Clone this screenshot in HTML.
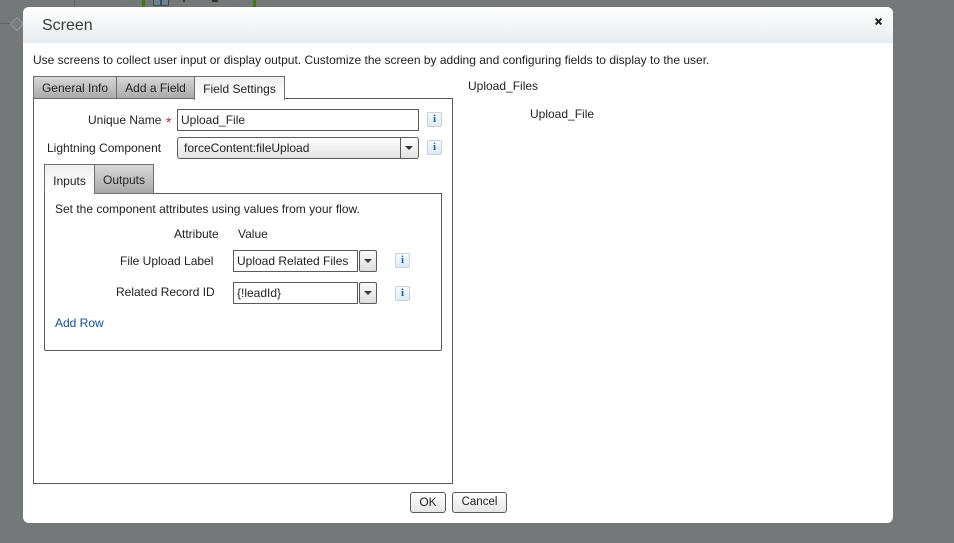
<!DOCTYPE html>
<html>
<head>
<meta charset="utf-8">
<style>
html,body{margin:0;padding:0;}
body{width:954px;height:543px;overflow:hidden;background:#747878;position:relative;font-family:"Liberation Sans",sans-serif;font-size:12px;color:#222;}
.a{position:absolute;box-sizing:border-box;white-space:nowrap;}
.t{position:absolute;white-space:nowrap;line-height:14px;}
.tab{position:absolute;box-sizing:border-box;border:1px solid #6f6f6f;background:linear-gradient(#d8d8d8,#a9a9a9);text-align:center;}
.tab.on{background:linear-gradient(#f0f0f0,#fff);}
.inp{position:absolute;box-sizing:border-box;border:1px solid #5a5a5a;background:#fff;padding-left:3px;}
.info{position:absolute;box-sizing:border-box;width:15px;height:15px;border:1px solid #c9d2da;border-radius:2px;background:linear-gradient(#f8fafc,#e2e9ef);color:#0b62c4;font:bold 11px/13px "Liberation Serif",serif;text-align:center;}
.arr{position:absolute;width:0;height:0;border-left:4px solid transparent;border-right:4px solid transparent;border-top:4px solid #333;}
.btn{position:absolute;box-sizing:border-box;border:1px solid #5a5a5a;border-radius:3px;background:linear-gradient(#fff,#e6e6e6);text-align:center;}
</style>
</head>
<body>
<!-- background -->
<div class="a" style="left:74px;top:0;width:1px;height:7px;background:#5f6363"></div>
<div class="a" style="left:142px;top:0;width:3px;height:7px;background:#3f7a10"></div>
<div class="a" style="left:253px;top:0;width:3px;height:7px;background:#3f7a10"></div>
<div class="a" style="left:153px;top:0;width:16px;height:6px;border:1px solid #3d4a55;border-top:0;background:#6f8290"></div>
<div class="a" style="left:160px;top:0;width:2px;height:6px;background:#3d4a55"></div>
<div class="a" style="left:183px;top:0;width:2px;height:2px;background:#333"></div>
<div class="a" style="left:212px;top:0;width:6px;height:2px;background:#333"></div>
<div class="a" style="left:0;top:23px;width:12px;height:1px;background:#5f6363"></div>
<div class="a" style="left:12px;top:19px;width:10px;height:10px;border:1px solid #959999;transform:rotate(45deg);background:#787c7c"></div>

<!-- dialog -->
<div class="a" style="left:23px;top:7px;width:870px;height:516px;background:#fff;border-radius:6px;overflow:hidden">
  <div class="a" style="left:0;top:0;width:870px;height:36px;background:linear-gradient(#fff,#e8ecee)"></div>
</div>
<div class="t" style="left:42px;top:17px;font-size:16px;line-height:18px;color:#3a3a3a">Screen</div>
<svg class="a" style="left:875px;top:18px" width="7" height="7" viewBox="0 0 7 7"><path d="M0.6 0.6L6.4 6.4M6.4 0.6L0.6 6.4" stroke="#222" stroke-width="2" fill="none"/></svg>
<div class="t" style="left:33px;top:53px">Use screens to collect user input or display output. Customize the screen by adding and configuring fields to display to the user.</div>

<!-- left panel -->
<div class="a" style="left:33px;top:98px;width:420px;height:386px;border:1px solid #5a5a5a"></div>
<div class="tab" style="left:33px;top:76px;width:84px;height:23px;line-height:22px">General Info</div>
<div class="tab" style="left:116px;top:76px;width:79px;height:23px;line-height:22px">Add a Field</div>
<div class="tab on" style="left:194px;top:76px;width:91px;height:24px;line-height:24px;border-bottom:0">Field Settings</div>

<div class="t" style="left:88px;top:113px">Unique Name</div>
<div class="t" style="left:166px;top:115px;color:#d8232a;font-size:14px;">*</div>
<div class="inp" style="left:177px;top:109px;width:242px;height:22px;line-height:20px">Upload_File</div>
<div class="info" style="left:427px;top:112px">i</div>

<div class="t" style="left:47px;top:141px">Lightning Component</div>
<div class="a" style="left:177px;top:137px;width:242px;height:22px;border:1px solid #5a5a5a;border-radius:3px;background:linear-gradient(#fff,#e2e2e2);padding-left:6px;line-height:21px">forceContent:fileUpload</div>
<div class="a" style="left:400px;top:137px;width:1px;height:22px;background:#5a5a5a"></div>
<div class="arr" style="left:405px;top:146px"></div>
<div class="info" style="left:427px;top:140px">i</div>

<!-- inner panel -->
<div class="a" style="left:44px;top:193px;width:398px;height:158px;border:1px solid #5a5a5a;border-radius:0 0 2px 2px"></div>
<div class="tab on" style="left:44px;top:164px;width:51px;height:30px;line-height:33px;border-bottom:0">Inputs</div>
<div class="tab" style="left:94px;top:164px;width:60px;height:30px;line-height:30px">Outputs</div>

<div class="t" style="left:55px;top:202px">Set the component attributes using values from your flow.</div>
<div class="t" style="left:174px;top:227px">Attribute</div>
<div class="t" style="left:238px;top:227px">Value</div>

<div class="t" style="left:120px;top:254px">File Upload Label</div>
<div class="inp" style="left:233px;top:250px;width:125px;height:22px;line-height:21px">Upload Related Files</div>
<div class="btn" style="left:359px;top:250px;width:18px;height:22px;background:linear-gradient(#fafafa,#dcdcdc);border-radius:2px"></div>
<div class="arr" style="left:364px;top:259px"></div>
<div class="info" style="left:395px;top:253px">i</div>

<div class="t" style="left:116px;top:285px">Related Record ID</div>
<div class="inp" style="left:233px;top:282px;width:125px;height:22px;line-height:21px">{!leadId}</div>
<div class="btn" style="left:359px;top:282px;width:18px;height:22px;background:linear-gradient(#fafafa,#dcdcdc);border-radius:2px"></div>
<div class="arr" style="left:364px;top:291px"></div>
<div class="info" style="left:395px;top:286px">i</div>

<div class="t" style="left:55px;top:316px;color:#0f4f9c">Add Row</div>

<!-- right -->
<div class="t" style="left:468px;top:79px">Upload_Files</div>
<div class="t" style="left:530px;top:107px">Upload_File</div>

<!-- buttons -->
<div class="btn" style="left:410px;top:492px;width:36px;height:21px;line-height:18px">OK</div>
<div class="btn" style="left:452px;top:492px;width:55px;height:21px;line-height:19px;font-size:11.5px">Cancel</div>
</body>
</html>
